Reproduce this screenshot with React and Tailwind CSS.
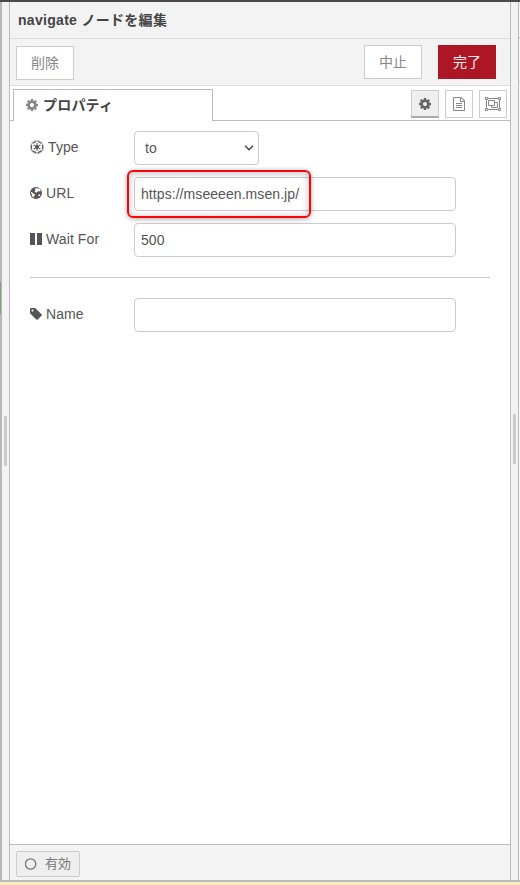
import React from "react";
import { FaEmpire } from "react-icons/fa";

function Cog({ className }) {
  return (
    <svg viewBox="0 128 1536 1536" fill="currentColor" className={className}>
      <path d="M1024 896q0-106-75-181t-181-75-181 75-75 181 75 181 181 75 181-75 75-181zm512-109v222q0 12-8 23t-20 13l-185 28q-19 54-39 91 35 50 107 138 10 12 10 25t-9 23q-27 37-99 108t-94 71q-12 0-26-9l-138-108q-44 23-91 38-16 136-29 186-7 28-36 28h-222q-14 0-24.5-8.5t-11.5-21.5l-28-184q-49-16-90-37l-141 107q-10 9-25 9-14 0-25-11-126-114-165-168-7-10-7-23 0-12 8-23 15-21 51-66.5t54-70.5q-27-50-41-99l-183-27q-13-2-21-12.5t-8-23.5v-222q0-12 8-23t19-13l186-28q14-46 39-92-40-57-107-138-10-12-10-24 0-10 9-23 26-36 98.5-107.5t94.5-71.5q13 0 26 10l138 107q44-23 91-38 16-136 29-186 7-28 36-28h222q14 0 24.5 8.5t11.5 21.5l28 184q49 16 90 37l142-107q9-9 24-9 13 0 25 10 129 119 165 170 7 8 7 22 0 12-8 23-15 21-51 66.5t-54 70.5q26 50 41 98l183 28q13 2 21 12.5t8 23.5z" />
    </svg>
  );
}

function FileText() {
  return (
    <svg viewBox="0 0 1536 1792" fill="currentColor" className="h-[14px] w-3">
      <path d="M1468 380q28 28 48 76t20 88v1152q0 40-28 68t-68 28h-1344q-40 0-68-28t-28-68v-1600q0-40 28-68t68-28h896q40 0 88 20t76 48zm-444-244v376h376q-10-29-22-41l-313-313q-12-12-41-22zm384 1528v-1024h-416q-40 0-68-28t-28-68v-416h-768v1536h1280zm-1024-864q0-14 9-23t23-9h704q14 0 23 9t9 23v64q0 14-9 23t-23 9h-704q-14 0-23-9t-9-23v-64zm736 224q14 0 23 9t9 23v64q0 14-9 23t-23 9h-704q-14 0-23-9t-9-23v-64q0-14 9-23t23-9h704zm0 256q14 0 23 9t9 23v64q0 14-9 23t-23 9h-704q-14 0-23-9t-9-23v-64q0-14 9-23t23-9h704z" />
    </svg>
  );
}

function ObjectGroup() {
  return (
    <svg viewBox="0 0 16 14" fill="none" stroke="currentColor" className="h-[14px] w-4">
      <path d="M3 1.5h10M3 12.5h10M1.5 3v8M14.5 3v8" />
      <path d="M.5.5h2v2h-2zM13.5.5h2v2h-2zM.5 11.5h2v2h-2zM13.5 11.5h2v2h-2z" />
      <path d="M3.5 3.5h6v5h-6zM9.5 5.5h3v5h-6v-2" />
    </svg>
  );
}

function Globe() {
  return (
    <svg viewBox="0 0 12 12" className="h-3 w-3">
      <circle cx="6" cy="6" r="6" fill="#555" />
      <path d="M5.4 1.4 6.6 1 7.4 1.5 8.8 1.2 10.2 2.6 10.8 4 9.6 4.6 8.6 4 7.4 4.8 6.4 5.8 5.4 5.2 4.6 4.2 5.4 3.2 4.9 2.4Z" fill="#fff" />
      <path d="M1.1 4.8 2.4 5.6 3.2 6.6 4.9 7.2 5 8.2 4 9.2 3.5 10.4 2.2 9.4 1.8 7.6 1 6.2Z" fill="#fff" />
      <path d="M8.8 7.4 10.4 7 10 8.6 8.8 9.6 8.2 8.6Z" fill="#fff" />
    </svg>
  );
}

function Pause() {
  return (
    <svg viewBox="0 0 12 12" fill="currentColor" className="h-3 w-3">
      <path d="M0 0h5v12H0zM7 0h5v12H7z" />
    </svg>
  );
}

function Tag() {
  return (
    <svg viewBox="128 128 1536 1536" fill="currentColor" className="h-3 w-3">
      <path d="M576 448q0-53-37.5-90.5t-90.5-37.5-90.5 37.5-37.5 90.5 37.5 90.5 90.5 37.5 90.5-37.5 37.5-90.5zm1067 576q0 53-37 90l-491 492q-39 37-91 37-53 0-90-37l-715-716q-38-37-64.5-101t-26.5-117v-416q0-52 38-90t90-38h416q53 0 117 26.5t102 64.5l715 714q37 39 37 91z" />
    </svg>
  );
}

function Row({ icon, label, children }) {
  return (
    <div className="flex h-[34px]">
      <div className="flex h-8 w-[104px] shrink-0 items-center gap-1">
        {icon}
        <span className="tracking-[0.1px]">{label}</span>
      </div>
      {children}
    </div>
  );
}

const field =
  "h-[34px] w-[322px] rounded-[4px] border border-[#ccc] bg-white px-1.5 text-[14px] tracking-[0.07px] text-[#555] outline-none";
const button =
  "flex h-[34px] w-[58px] items-center justify-center border border-[#ccc] bg-white text-[#888]";
const smallButton =
  "flex h-7 w-7 items-center justify-center border border-[#ccc] bg-white text-[#888]";

export default function App() {
  return (
    <div className="flex h-[885px] w-[520px] flex-col overflow-hidden bg-[#fcebbd] font-['Liberation_Sans','Noto_Sans_CJK_JP',sans-serif] text-[14px] leading-5 text-[#555]">
      <div className="h-0.5 shrink-0 bg-[#4b494a]" />
      <div className="flex h-[878px] shrink-0">
        <div className="w-0.5 bg-[#b8b8b8] pt-[280px]">
          <div className="h-8 w-px bg-[#829c7e]" />
        </div>
        <div className="w-[7px] bg-[#f3f3f3] pl-0.5 pt-[414px]">
          <div className="h-[50px] w-[3px] bg-[#ccc]" />
        </div>
        <main className="flex w-[502px] flex-col border-x border-[#bbb] bg-white">
          <h1 className="flex h-[37px] shrink-0 items-center border-b border-[#ddd] bg-[#f3f3f3] pl-2 font-bold tracking-[0.3px] text-[#444]">
            navigate ノードを編集
          </h1>
          <div className="flex h-[47px] shrink-0 items-start border-b border-[#ddd] bg-[#f3f3f3] pl-1.5 pr-3.5 pt-1.5">
            <button className={`${button} mt-px`}>削除</button>
            <button className={`${button} ml-auto`}>中止</button>
            <button className="ml-4 flex h-[34px] w-[58px] items-center justify-center bg-[#ad1625] text-[#eee]">
              完了
            </button>
          </div>
          <div className="flex h-[35px] shrink-0 items-end">
            <div className="h-px w-[3px] bg-[#bbb]" />
            <div className="flex h-8 w-[200px] items-center border border-b-0 border-[#bbb] pb-0.5 pl-3 font-bold text-[#444]">
              <Cog className="h-3 w-3 text-[#888]" />
              <span className="ml-[5px] tracking-[0.2px]">プロパティ</span>
            </div>
            <div className="flex h-[35px] flex-1 items-start justify-end gap-1.5 border-b border-[#bbb] pr-[3px] pt-1">
              <button className="flex h-7 w-7 items-center justify-center border border-b-2 border-[#ccc] border-b-[#aaa] bg-[#efefef] text-[#666]">
                <Cog className="h-3 w-3" />
              </button>
              <button className={smallButton}><FileText /></button>
              <button className={smallButton}><ObjectGroup /></button>
            </div>
          </div>
          <form className="flex flex-1 flex-col gap-3 px-5 pt-2.5">
            <Row icon={<FaEmpire className="h-3.5 w-3.5" />} label="Type">
              <div className="flex h-[34px] w-[125px] items-center justify-between rounded-[4px] border border-[#ccc] pl-2.5 pr-1">
                <span className="tracking-[0.2px]">to</span>
                <svg viewBox="0 0 10 6" fill="none" stroke="#444" strokeWidth="1.4" className="h-1.5 w-2.5">
                  <path d="m1 .8 4 4 4-4" />
                </svg>
              </div>
            </Row>
            <div className="relative">
              <Row icon={<Globe />} label="URL">
                <input className={field} defaultValue="https://mseeeen.msen.jp/" />
              </Row>
              <div className="absolute -top-[7px] left-[97px] h-[48px] w-[184px] rounded-[6px] border-2 border-[#fb0509] shadow-[0_1px_5px_rgba(0,0,0,0.35),inset_0_1px_6px_1px_rgba(0,0,0,0.22)]" />
            </div>
            <Row icon={<Pause />} label="Wait For">
              <input className={field} defaultValue="500" />
            </Row>
            <hr className="mb-2 mt-2 border-[#ccc]" />
            <Row icon={<Tag />} label="Name">
              <input className={field} />
            </Row>
          </form>
          <footer className="flex h-9 shrink-0 items-start border-t border-[#bbb] bg-[#f3f3f3] pl-1.5 pt-1.5">
            <button className="flex h-[26px] w-16 items-center gap-2 rounded-[2px] border border-[#ccc] bg-[#efefef] pl-2 text-[13px] text-[#777]">
              <svg viewBox="0 0 12 12" fill="none" stroke="currentColor" strokeWidth="1.3" className="h-3 w-3">
                <circle cx="5.6" cy="6" r="5.2" />
              </svg>
              有効
            </button>
          </footer>
        </main>
        <div className="w-[7px] bg-[#f3f3f3] pl-0.5 pt-[412px]">
          <div className="h-[50px] w-[3px] bg-[#ccc]" />
        </div>
        <div className="w-px bg-[#bbb]" />
        <div className="w-px bg-[#f7f7f7]">
          <div className="mt-[35px] h-px bg-[#bbb]" />
          <div className="mt-[42px] h-px bg-[#ddd]" />
        </div>
      </div>
      <div className="h-0.5 shrink-0 bg-[#bbb]" />
    </div>
  );
}
